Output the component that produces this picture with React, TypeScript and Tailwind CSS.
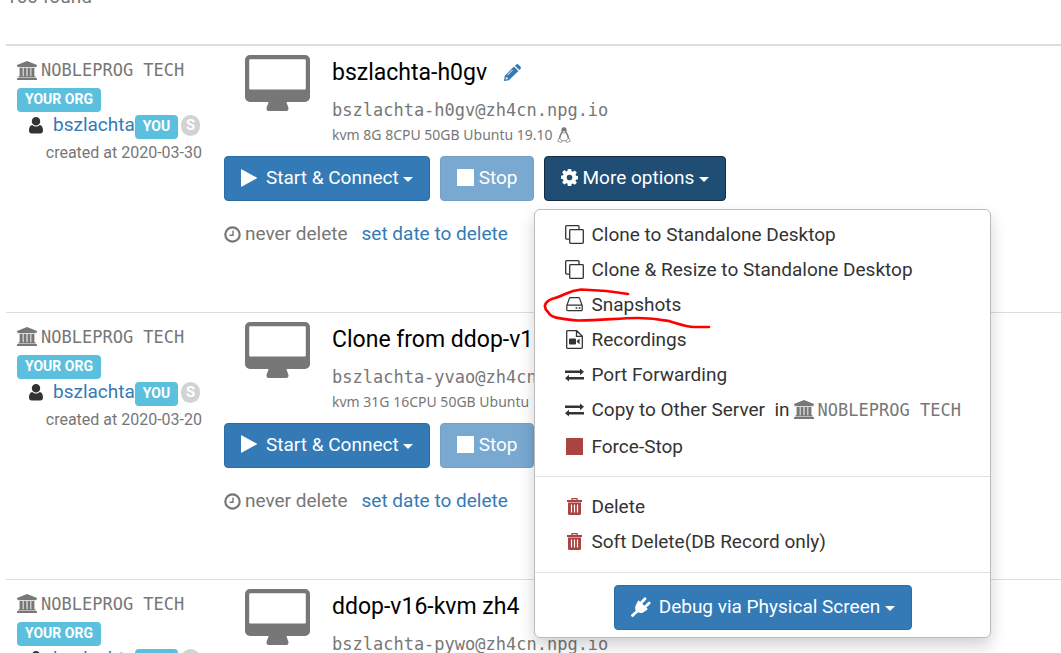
import React from "react";

type IconProps = { className?: string };

const Bank = ({ className = "" }: IconProps) => (
  <svg viewBox="0 0 20 19" className={`inline-block h-[19px] w-5 shrink-0 ${className}`} fill="currentColor" aria-hidden="true">
    <path d="M10 0 20 4v1.500h-1.300v.7H1.300v-.7H0V4zM2.600 7h3.100v8.200H6.600V7h2.900v8.200h1V7h2.900v8.200h.9V7h3.100v8.200h.6q.7 0 .7.7v.5H1.300v-.5q0-.7.7-.7h.6zM.7 17.100h18.600q.7 0 .7.7V19H0v-1.200q0-.7.7-.7z" />
  </svg>
);

const User = () => (
  <svg viewBox="0 0 14 17" className="h-[17px] w-[14px] shrink-0 text-[#333]" fill="currentColor" aria-hidden="true">
    <path d="M7 0a4.2 4.2 0 0 1 4.2 4.2A4.2 4.2 0 0 1 7 8.5a4.2 4.2 0 0 1-4.2-4.3A4.2 4.2 0 0 1 7 0zM3.4 7.9C4.4 8.9 5.600 9.400 7 9.400s2.600-.5 3.600-1.500C13 8.200 14 10.500 14 13.600c0 1.800-1 2.900-2.700 2.900H2.700C1 16.500 0 15.400 0 13.600 0 10.500 1 8.200 3.400 7.900z" />
  </svg>
);

const Desktop = () => (
  <svg viewBox="0 0 65 56" className="h-14 w-[65px] shrink-0 text-[#777]" fill="currentColor" aria-hidden="true">
    <path fillRule="evenodd" d="M5 0h55a5 5 0 0 1 5 5v37a5 5 0 0 1-5 5H41.500c.3 2.500 2 4.500 2 6.500 0 1.500-.8 2.500-2 2.500H23.500c-1.400 0-2-1-2-2.500 0-2 1.700-4 2-6.500H5a5 5 0 0 1-5-5V5a5 5 0 0 1 5-5zM5.200 4.200a1 1 0 0 0-1 1V33.500a1 1 0 0 0 1 1h54.600a1 1 0 0 0 1-1V5.200a1 1 0 0 0-1-1z" />
  </svg>
);

const Pencil = () => (
  <svg viewBox="0 0 17 17" className="size-[17px]" fill="currentColor" aria-hidden="true">
    <path fillRule="evenodd" d="M9.900 2.600 14.400 7.100 4.900 16.300.3 17 0 16.700l.7-4.800zM1.900 13.200l-.4 2.400 2.400-.5-.3-1.400zM8.300 5.700l-5 5 .5.5 5-5zM10.900 1.700 12.300.4q1-.8 2 .1l2.200 2.200q.9 1 .1 2L15.300 6.100z" />
  </svg>
);

const Penguin = () => (
  <svg viewBox="0 0 14 16" className="h-4 w-[14px]" fill="none" stroke="currentColor" aria-hidden="true">
    <path d="M5.200 4.500C4.900 2 5.400.9 7 .9S9.100 2 8.800 4.500c.2 1.700 2.600 3.600 2.600 7M5.200 4.500C5 6.200 2.600 8.100 2.600 11.500" strokeWidth="1.500" />
    <path d="M5 4.200h4V2L7 .9 5 2z" fill="currentColor" stroke="none" />
    <path d="M5.300 5.300 7 6.200l1.700-.9M4.500 13.800h5" strokeWidth=".8" />
    <path d="M2.200 11 .7 14.300l3.500 1.200 1-1.700zM11.800 11l1.500 3.300-3.500 1.200-1-1.700z" strokeWidth=".7" />
  </svg>
);

const Play = () => (
  <svg viewBox="0 0 16 18" className="h-[18px] w-4" fill="currentColor" aria-hidden="true">
    <path d="M.5.3 16 8.700v.6L.5 17.700 0 17.500V.5z" />
  </svg>
);

const Square = ({ className = "" }: IconProps) => (
  <svg viewBox="0 0 17 17" className={`size-[17px] ${className}`} fill="currentColor" aria-hidden="true">
    <rect width="17" height="17" rx=".5" />
  </svg>
);

const Gear = () => (
  <svg viewBox="0 0 24 24" className="size-[17px]" fill="currentColor" aria-hidden="true">
    <path fillRule="evenodd" d="M9.700 0h4.600l.7 3.300 1.500.6L19.400 2l3 3-1.900 2.900.6 1.500 2.900.6v4.400l-2.900.6-.6 1.500 1.900 2.900-3 3-2.900-1.900-1.500.6-.7 3.400H9.700L9 20.600l-1.500-.6-2.900 1.900-3-3L3.500 16l-.6-1.500L0 13.900V9.500l2.900-.6.6-1.500L1.600 4.500l3-3 2.900 1.900L9 2.900zM12 8a4 4 0 1 0 0 8 4 4 0 0 0 0-8z" />
  </svg>
);

const Clock = () => (
  <svg viewBox="0 0 17 17" className="size-[17px]" fill="none" stroke="currentColor" aria-hidden="true">
    <circle cx="8.500" cy="8.500" r="7.200" strokeWidth="2.200" />
    <path d="M9 4.500V9.200H5.500" strokeWidth="1.400" />
  </svg>
);

const Caret = () => (
  <svg viewBox="0 0 10 5" className="mt-1 h-[5px] w-[10px]" fill="currentColor" aria-hidden="true">
    <path d="M0 0h10L5 5z" />
  </svg>
);

const Clone = () => (
  <svg viewBox="0 0 19 19" className="size-[19px]" fill="none" stroke="currentColor" strokeWidth="1.300" aria-hidden="true">
    <rect x="4.700" y="4.700" width="13.600" height="13.600" rx=".8" />
    <path d="M14 4V1.500q0-.8-.8-.8H1.500q-.8 0-.8.8v11.800q0 .8.8.8H4" />
  </svg>
);

const Drive = () => (
  <svg viewBox="0 0 17 15" className="h-[15px] w-[17px]" fill="none" stroke="currentColor" strokeWidth="1.200" aria-hidden="true">
    <path d="M.8 8.700 3.300 1.600q.3-.9 1.200-.9h8q.9 0 1.200.9l2.500 7.100v4q0 1-1 1H1.800q-1 0-1-1zM1 8.200h15" />
    <path d="M9.600 11h1.700M12.700 11h1.700" strokeWidth="1.500" />
  </svg>
);

const VideoFile = () => (
  <svg viewBox="0 0 17 19" className="h-[19px] w-[17px]" fill="none" stroke="currentColor" strokeWidth="1.300" aria-hidden="true">
    <path d="M1.500.7h9.200l5.600 5.500v11.300q0 .8-.8.8h-14q-.8 0-.8-.8v-16q0-.8.8-.8zM10.500.7v5.700h5.800" />
    <path d="M4 8.500h5q1 0 1 1v4q0 1-1 1H4q-1 0-1-1v-4q0-1 1-1zM10.500 11.200 13.600 8.500v6z" fill="currentColor" stroke="none" />
  </svg>
);

const Exchange = () => (
  <svg viewBox="0 0 19 14" className="h-[14px] w-[19px]" fill="currentColor" aria-hidden="true">
    <path d="M0 2.600h15V.4L19 3.800 15 7.200V5H0zM19 9H4V6.800L0 10.200l4 3.400v-2.200H19z" />
  </svg>
);

const Trash = () => (
  <svg viewBox="0 0 15 17" className="h-[17px] w-[15px] text-[#a94442]" fill="currentColor" aria-hidden="true">
    <path fillRule="evenodd" d="M4.200 2V1q0-1 1-1h4.600q1 0 1 1v1H15v2H0V2zM5.500 2h4V1.200h-4zM1 4.500h13V15.500q0 1.500-1.500 1.500h-10Q1 17 1 15.500zM3.900 6.500v8h1.200v-8zM6.900 6.500v8h1.200v-8zM9.900 6.500v8h1.200v-8z" />
  </svg>
);

const Plug = () => (
  <svg viewBox="0 0 20 20" className="size-5" fill="none" stroke="currentColor" aria-hidden="true">
    <path d="M10.500 5.500 14 1.800M14.500 9.500l3.700-3.500" strokeWidth="2.800" strokeLinecap="round" />
    <path d="M7.500 3.300 16.800 12c-1 1.200-2 1.700-3.300 2.400-2.500 2-5 1.800-7.500.7C3.500 13 3.800 9.500 5.500 7c.6-1.300 1-2.500 2-3.700z" fill="currentColor" stroke="none" />
    <path d="M7 13.500C5 15.500 4 15.500 1.500 18.500" strokeWidth="2.800" strokeLinecap="round" />
  </svg>
);

const btn =
  "flex h-[45px] items-center rounded border px-4 pb-[2px] text-[19px] leading-[27px] text-white whitespace-nowrap";
const mono = "font-['DejaVu_Sans_Mono',monospace] text-[17px] text-[#777]";
const badge =
  "inline-flex h-6 items-center rounded bg-[#5bc0de] px-2 pb-[2px] text-[14px] leading-4 font-bold text-white";

function Org() {
  return (
    <span className={`inline-flex items-center gap-1 whitespace-nowrap ${mono}`}>
      <Bank />
      <span className="pt-[2px]">NOBLEPROG TECH</span>
    </span>
  );
}

function MenuItem({ icon, children }: { icon: React.ReactNode; children: React.ReactNode }) {
  return (
    <li>
      <a href="#" className="flex h-[35px] items-center pl-[29px]">
        <span className="mr-[6px] flex w-[21px] justify-center">{icon}</span>
        {children}
      </a>
    </li>
  );
}

function OptionsMenu() {
  return (
    <div className="absolute top-[53px] -left-[10px] z-10 w-[457px] rounded-md border border-[#bbb] bg-white pt-[7px] pb-[7px] text-[19px] leading-[27px] text-[#333] shadow-[0_8px_16px_rgba(0,0,0,0.18)]">
      <ul>
        <MenuItem icon={<Clone />}>Clone to Standalone Desktop</MenuItem>
        <MenuItem icon={<Clone />}>Clone &amp; Resize to Standalone Desktop</MenuItem>
        <MenuItem icon={<Drive />}>Snapshots</MenuItem>
        <MenuItem icon={<VideoFile />}>Recordings</MenuItem>
        <MenuItem icon={<Exchange />}>Port Forwarding</MenuItem>
        <MenuItem icon={<Exchange />}>
          <span className="mr-1 whitespace-pre">Copy to Other Server  in</span>
          <Org />
        </MenuItem>
      </ul>
      <ul className="mt-[2px]">
        <MenuItem icon={<Square className="text-[#a94442]" />}>Force-Stop</MenuItem>
      </ul>
      <hr className="my-3 border-[#e2e2e2]" />
      <ul>
        <MenuItem icon={<Trash />}>Delete</MenuItem>
        <MenuItem icon={<Trash />}>Soft Delete(DB Record only)</MenuItem>
      </ul>
      <hr className="mt-[13px] mb-3 border-[#e2e2e2]" />
      <button type="button" className={`${btn} mx-auto border-[#2e6da4] bg-[#337ab7]`}>
        <Plug />
        <span className="mr-[5px] ml-2">Debug via Physical Screen</span>
        <Caret />
      </button>
      <svg viewBox="0 0 170 44" className="pointer-events-none absolute top-[77px] left-[8px] h-11 w-[170px]" fill="none" stroke="#f00" strokeWidth="2.700" strokeLinecap="round" strokeLinejoin="round" aria-hidden="true">
        <path d="M85 7C68 4 52 3 38 2.500 25 3.500 23 8 12 11 2 14-1 19 5 25 8 31 15 31.500 35 33.500 60 33.500 75 31 95 31c15 0 20 1 31 3 10 3 18 6 25 6h15" />
      </svg>
    </div>
  );
}

type Machine = { name: string; host: string; spec: string; created: string; editable?: boolean; open?: boolean };

const machines: Machine[] = [
  { name: "bszlachta-h0gv", host: "bszlachta-h0gv@zh4cn.npg.io", spec: "kvm 8G 8CPU 50GB Ubuntu 19.10", created: "2020-03-30", editable: true, open: true },
  { name: "Clone from ddop-v16", host: "bszlachta-yvao@zh4cn.npg.io", spec: "kvm 31G 16CPU 50GB Ubuntu 19.10", created: "2020-03-20" },
  { name: "ddop-v16-kvm zh4", host: "bszlachta-pywo@zh4cn.npg.io", spec: "kvm 8G 8CPU 50GB Ubuntu 19.10", created: "2020-03-20" },
];

function MachineRow({ m }: { m: Machine }) {
  return (
    <tr className="h-[267px] border-t border-[#ddd] align-top">
      <td className="w-[208px] pt-[10px] pl-[11px]">
        <div className="flex h-7 items-center"><Org /></div>
        <div className="mt-1 flex"><span className={badge}>YOUR ORG</span></div>
        <div className="flex h-[27px] items-center pl-3">
          <User />
          <a href="#" className="ml-[10px] text-[19px] text-[#337ab7]">bszlachta</a>
          <span className={`${badge} mt-[3px]`}>YOU</span>
          <span className="ml-[3px] flex h-[21px] w-[19px] items-center justify-center rounded-full bg-[#d3d3d3] text-[15px] font-bold text-white">S</span>
        </div>
        <div className="pr-[12px] text-right text-[16px] leading-[27px] whitespace-nowrap text-[#777]">created at {m.created}</div>
      </td>
      <td className="pt-[9px] pl-[10px]">
        <div className="flex h-[101px]">
          <div className="w-[87px] shrink-0 pl-[21px]"><Desktop /></div>
          <div className="ml-[21px] whitespace-nowrap">
            <h3 className="flex items-center text-[23px] leading-[35px] text-black">
              {m.name}
              {m.editable && <a href="#" aria-label="Rename" className="ml-[17px] text-[#337ab7]"><Pencil /></a>}
            </h3>
            <div className={`mt-[7px] leading-[27px] ${mono}`}>{m.host}</div>
            <div className="flex items-center gap-1 font-['Noto_Sans',sans-serif] text-[14px] leading-[22px] text-[#777]">
              {m.spec}
              <Penguin />
            </div>
          </div>
        </div>
        <div className="flex gap-[10px]">
          <button type="button" className={`${btn} border-[#2e6da4] bg-[#337ab7]`}>
            <Play />
            <span className="mr-1 ml-[9px]">Start &amp; Connect</span>
            <Caret />
          </button>
          <button type="button" disabled className={`${btn} border-[#2e6da4] bg-[#337ab7] opacity-65`}>
            <Square />
            <span className="ml-[5px]">Stop</span>
          </button>
          <div className="relative">
            <button type="button" className={`${btn} ${m.open ? "border-[#122b40] bg-[#204d74]" : "border-[#2e6da4] bg-[#337ab7]"}`}>
              <Gear />
              <span className="mr-[5px] ml-1">More options</span>
              <Caret />
            </button>
            {m.open && <OptionsMenu />}
          </div>
        </div>
        <div className="mt-5 flex h-[27px] items-center text-[19px] text-[#777]">
          <Clock />
          <span className="ml-1">never delete</span>
          <a href="#" className="ml-[14px] text-[#337ab7]">set date to delete</a>
        </div>
      </td>
    </tr>
  );
}

export default function App() {
  return (
    <main className="h-screen overflow-hidden bg-white pl-[6px] font-[Roboto,sans-serif]">
      <p className="-mt-[17px] mb-[34px] text-[19px] leading-[27px] text-[#777]">100 found</p>
      <table className="w-full border-collapse border-t-2 border-[#ddd]">
        <tbody>
          {machines.map((m) => (
            <MachineRow key={m.host} m={m} />
          ))}
        </tbody>
      </table>
    </main>
  );
}
